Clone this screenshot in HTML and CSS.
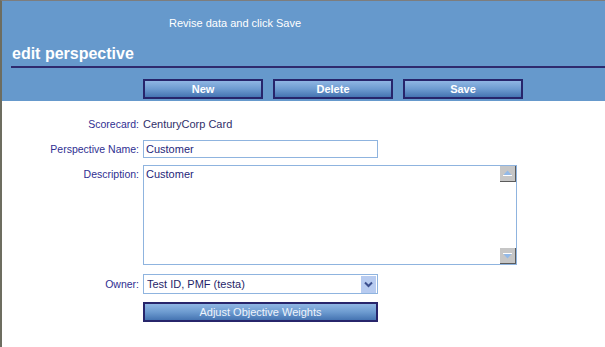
FILE: index.html
```html
<!DOCTYPE html>
<html>
<head>
    <link rel="stylesheet" href="styles.css">
</head>
<body>
<div class="page">
    <div class="header">
        <div class="hint">Revise data and click Save</div>
        <h2 class="title">edit perspective</h2>
        <div class="toolbar">
            <button class="btn">New</button>
            <button class="btn">Delete</button>
            <button class="btn">Save</button>
        </div>
    </div>
    <div class="form">
        <div class="row row-card">
            <label>Scorecard:</label>
            <div class="value">CenturyCorp Card</div>
        </div>
        <div class="row row-name">
            <label>Perspective Name:</label>
            <input class="field" type="text" value="Customer">
        </div>
        <div class="row row-desc">
            <label>Description:</label>
            <div class="memo">
                <textarea>Customer</textarea>
                <div class="scroll">
                    <span class="arrow">
                        <svg width="15" height="15" viewBox="0 0 15 15"><path d="M3.5 9 L7.5 4.5 L11.5 9 Z" fill="#92b9e8"/><rect x="3" y="9" width="9" height="1" fill="#fff"/></svg>
                    </span>
                    <span class="arrow">
                        <svg width="15" height="15" viewBox="0 0 15 15"><rect x="3" y="5" width="9" height="1" fill="#fff"/><path d="M3.5 6 L11.5 6 L7.5 10.5 Z" fill="#92b9e8"/></svg>
                    </span>
                </div>
            </div>
        </div>
        <div class="row row-owner">
            <label>Owner:</label>
            <div class="combo">
                <select>
                    <option>Test ID, PMF (testa)</option>
                </select>
                <span class="drop">
                    <svg width="15" height="17" viewBox="0 0 15 17"><path d="M4 6.5 L7.5 10 L11 6.5" fill="none" stroke="#3b4f8e" stroke-width="2"/></svg>
                </span>
            </div>
        </div>
        <div class="row row-adjust">
            <label></label>
            <button class="btn btn-wide">Adjust Objective Weights</button>
        </div>
    </div>
</div>
</body>
</html>
```

FILE: styles.css
```css
html, body {
    margin: 0;
    padding: 0;
    background: #fff;
}

body {
    font-family: "Liberation Sans", Arial, sans-serif;
    font-size: 11px;
}

.page {
    border-top: 1px solid #7d7d7d;
    border-left: 2px solid #6d6d60;
    height: 346px;
    overflow: hidden;
}

.header {
    background: #6699cc;
    padding: 15px 0 2px 0;
}

.header .hint {
    color: #fff;
    height: 14px;
    line-height: 14px;
    padding-left: 167px;
}

.header .title {
    margin: 14px 0 0 9px;
    padding-left: 1px;
    height: 22px;
    line-height: 20px;
    font-size: 16px;
    font-weight: bold;
    color: #fff;
    border-bottom: 2px solid #2e2a6e;
}

.toolbar {
    display: flex;
    gap: 10px;
    margin: 11px 0 0 141px;
}

.btn {
    width: 120px;
    height: 20px;
    padding: 0;
    border: 2px solid #27256b;
    background: linear-gradient(#8fb6e3, #6d9bd0 50%, #4574b2);
    color: #fff;
    font-family: "Liberation Sans", Arial, sans-serif;
    font-size: 11px;
    font-weight: bold;
    line-height: 16px;
}

.btn-wide {
    width: 235px;
    font-weight: normal;
    color: #eef3fb;
}

.form {
    padding-top: 14px;
}

.row {
    display: flex;
    align-items: flex-start;
    gap: 4px;
}

.row label {
    width: 137px;
    flex: none;
    text-align: right;
    color: #2f2f92;
    font-size: 10.5px;
    line-height: 18px;
}

.row-card {
    height: 18px;
}

.row-card .value {
    color: #2f2f6a;
    line-height: 18px;
}

.row-name {
    margin-top: 7px;
}

.field {
    box-sizing: border-box;
    width: 235px;
    height: 18px;
    margin: 0;
    padding: 0 2px;
    border: 1px solid #8fb4df;
    font-family: "Liberation Sans", Arial, sans-serif;
    font-size: 11px;
    color: #1f1f7a;
    outline: none;
}

.row-desc {
    margin-top: 7px;
}

.memo {
    box-sizing: border-box;
    width: 374px;
    height: 100px;
    border: 1px solid #8fb4df;
    display: flex;
}

.memo textarea {
    flex: 1;
    border: none;
    margin: 0;
    padding: 1px 2px;
    resize: none;
    overflow: hidden;
    font-family: "Liberation Sans", Arial, sans-serif;
    font-size: 11px;
    line-height: 14px;
    color: #1f1f7a;
    outline: none;
}

.scroll {
    width: 16px;
    display: flex;
    flex-direction: column;
    justify-content: space-between;
}

.arrow {
    display: block;
    box-sizing: border-box;
    width: 16px;
    height: 16px;
    background: #c6c6c6;
    border-bottom: 1px solid #5b5b5b;
    border-right: 1px solid #5b5b5b;
}

.arrow svg {
    display: block;
}

.row-owner {
    margin-top: 9px;
}

.row-owner label {
    line-height: 20px;
}

.combo {
    box-sizing: border-box;
    width: 235px;
    height: 20px;
    border: 1px solid #8fb4df;
    display: flex;
    align-items: center;
}

.combo select {
    flex: 1;
    height: 18px;
    border: none;
    margin: 0;
    padding: 0 0 0 3px;
    appearance: none;
    -webkit-appearance: none;
    background: #fff;
    font-family: "Liberation Sans", Arial, sans-serif;
    font-size: 11px;
    color: #1f1f6a;
    outline: none;
}

.drop {
    width: 15px;
    height: 17px;
    margin-right: 1px;
    background: #b7cbf0;
}

.drop svg {
    display: block;
}

.row-adjust {
    margin-top: 8px;
}
```
